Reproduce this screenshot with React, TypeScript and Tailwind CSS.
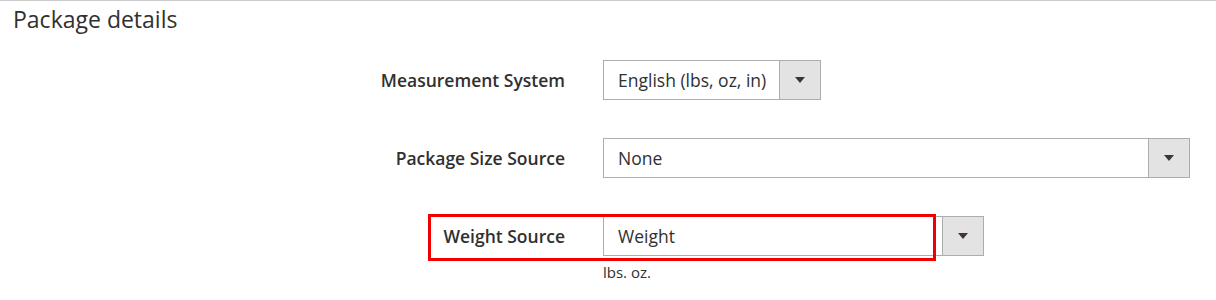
import React from 'react';

const rows = [
  { label: 'Measurement System', value: 'English (lbs, oz, in)', width: 'w-[218px]' },
  { label: 'Package Size Source', value: 'None', width: 'w-[587px]' },
  { label: 'Weight Source', value: 'Weight', width: 'w-[381px]', note: 'lbs. oz.', marked: true },
];

function Select({ value, width }: { value: string; width: string }) {
  return (
    <div className={`flex h-[40px] ${width}`}>
      <div className="flex flex-1 items-center border border-[#adadad] bg-white pl-[14px] text-[17.5px] text-[#303030]">
        {value}
      </div>
      <div className="flex w-[41px] items-center justify-center border-y border-r border-[#adadad] bg-[#e3e3e3]">
        <svg width="10" height="6" viewBox="0 0 10 6">
          <path d="M0 0 L10 0 L5 6 Z" fill="#41362f" />
        </svg>
      </div>
    </div>
  );
}

export default function App() {
  return (
    <div className="relative h-[300px] w-[1216px] overflow-hidden border-t border-[#cccccc] bg-white font-['Open_Sans',sans-serif] text-[#303030]">
      <h2 className="pl-[13px] pt-[5px] text-[23px] leading-[27px] font-normal text-[#303030]">Package details</h2>

      <div className="mt-[27px] flex flex-col gap-[38px]">
        {rows.map((row) => (
          <div key={row.label} className="grid grid-cols-[565px_1fr] gap-x-[38px]">
            <div className="flex h-[40px] items-center justify-end text-[17.5px] font-semibold text-[#303030]">
              {row.label}
            </div>
            <div>
              <Select value={row.value} width={row.width} />
              {row.note && <p className="mt-[6px] text-[15px] leading-[21px] text-[#303030]">{row.note}</p>}
            </div>
          </div>
        ))}
      </div>

      {/* annotation box around Weight Source */}
      <div className="absolute left-[428px] top-[213px] h-[47px] w-[508px] border-[3px] border-[#f00000]" />
    </div>
  );
}
